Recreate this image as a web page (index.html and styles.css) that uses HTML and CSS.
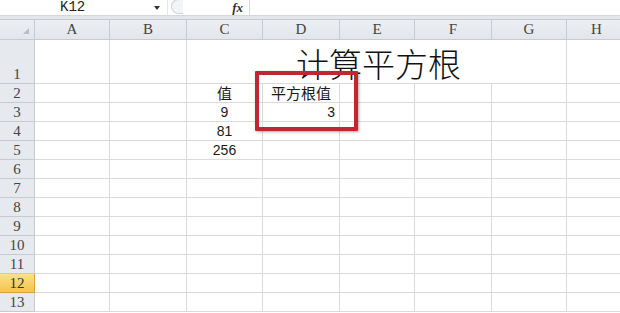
FILE: index.html
```html
<!DOCTYPE html>
<html lang="zh-CN">
<head>
  <meta charset="UTF-8">
  <title>计算平方根</title>
  <link rel="stylesheet" href="styles.css">
</head>
<body>
  <div class="formula-bar">
    <div class="name-box">
      <span class="name-text">K12</span>
      <span class="name-arrow"></span>
    </div>
    <div class="fx-box">
      <span class="grip"></span>
      <span class="fx">fx</span>
    </div>
    <div class="formula-input"></div>
  </div>
  <div class="bar-gap"></div>

  <main class="sheet">
    <div class="hd corner"><span class="corner-tri"></span></div>
    <div class="hd col">A</div>
    <div class="hd col">B</div>
    <div class="hd col">C</div>
    <div class="hd col">D</div>
    <div class="hd col">E</div>
    <div class="hd col">F</div>
    <div class="hd col">G</div>
    <div class="hd col last">H</div>

    <!-- row 1 -->
    <div class="hd row">1</div>
    <div class="cell"></div>
    <div class="cell"></div>
    <div class="cell title">计算平方根</div>
    <div class="cell last"></div>

    <!-- row 2 -->
    <div class="hd row">2</div>
    <div class="cell"></div>
    <div class="cell"></div>
    <div class="cell center">值</div>
    <div class="cell left">平方根值</div>
    <div class="cell"></div>
    <div class="cell"></div>
    <div class="cell"></div>
    <div class="cell last"></div>

    <!-- row 3 -->
    <div class="hd row">3</div>
    <div class="cell"></div>
    <div class="cell"></div>
    <div class="cell center num">9</div>
    <div class="cell right num">3</div>
    <div class="cell"></div>
    <div class="cell"></div>
    <div class="cell"></div>
    <div class="cell last"></div>

    <!-- row 4 -->
    <div class="hd row">4</div>
    <div class="cell"></div>
    <div class="cell"></div>
    <div class="cell center num">81</div>
    <div class="cell"></div>
    <div class="cell"></div>
    <div class="cell"></div>
    <div class="cell"></div>
    <div class="cell last"></div>

    <!-- row 5 -->
    <div class="hd row">5</div>
    <div class="cell"></div>
    <div class="cell"></div>
    <div class="cell center num">256</div>
    <div class="cell"></div>
    <div class="cell"></div>
    <div class="cell"></div>
    <div class="cell"></div>
    <div class="cell last"></div>

    <div class="hd row">6</div>
    <div class="cell"></div><div class="cell"></div><div class="cell"></div><div class="cell"></div>
    <div class="cell"></div><div class="cell"></div><div class="cell"></div><div class="cell last"></div>

    <div class="hd row">7</div>
    <div class="cell"></div><div class="cell"></div><div class="cell"></div><div class="cell"></div>
    <div class="cell"></div><div class="cell"></div><div class="cell"></div><div class="cell last"></div>

    <div class="hd row">8</div>
    <div class="cell"></div><div class="cell"></div><div class="cell"></div><div class="cell"></div>
    <div class="cell"></div><div class="cell"></div><div class="cell"></div><div class="cell last"></div>

    <div class="hd row">9</div>
    <div class="cell"></div><div class="cell"></div><div class="cell"></div><div class="cell"></div>
    <div class="cell"></div><div class="cell"></div><div class="cell"></div><div class="cell last"></div>

    <div class="hd row">10</div>
    <div class="cell"></div><div class="cell"></div><div class="cell"></div><div class="cell"></div>
    <div class="cell"></div><div class="cell"></div><div class="cell"></div><div class="cell last"></div>

    <div class="hd row">11</div>
    <div class="cell"></div><div class="cell"></div><div class="cell"></div><div class="cell"></div>
    <div class="cell"></div><div class="cell"></div><div class="cell"></div><div class="cell last"></div>

    <div class="hd row active">12</div>
    <div class="cell"></div><div class="cell"></div><div class="cell"></div><div class="cell"></div>
    <div class="cell"></div><div class="cell"></div><div class="cell"></div><div class="cell last"></div>

    <div class="hd row">13</div>
    <div class="cell"></div><div class="cell"></div><div class="cell"></div><div class="cell"></div>
    <div class="cell"></div><div class="cell"></div><div class="cell"></div><div class="cell last"></div>

    <!-- annotation box drawn over D2:D3 -->
    <div class="highlight"></div>
  </main>
</body>
</html>
```

FILE: styles.css
```css
* {
  margin: 0;
  padding: 0;
  box-sizing: border-box;
}

body {
  width: 620px;
  height: 313px;
  overflow: hidden;
  background: #fff;
  font-family: "Noto Sans CJK SC", sans-serif;
}

/* formula bar */
.formula-bar {
  display: flex;
  height: 16px;
  background: #fff;
  border-bottom: 1px solid #d4d8de;
}

.name-box {
  width: 168px;
  display: flex;
  align-items: center;
  padding-left: 60px;
  border-right: 1px solid #e2e5ea;
}

.name-text {
  font-family: "Liberation Mono", monospace;
  font-size: 14px;
  line-height: 15px;
  color: #222;
}

.name-arrow {
  margin-left: auto;
  margin-right: 7px;
  border-left: 3px solid transparent;
  border-right: 3px solid transparent;
  border-top: 4px solid #333;
}

.fx-box {
  width: 82px;
  display: flex;
  align-items: center;
  padding: 0 6px 0 3px;
  border-right: 1px solid #d4d8de;
}

.grip {
  width: 12px;
  height: 15px;
  margin-top: -2px;
  border: 1px solid #cfd3d9;
  border-right: none;
  border-radius: 8px 0 0 8px;
  background: #f3f4f6;
}

.fx {
  margin-left: auto;
  font-family: "Liberation Serif", serif;
  font-style: italic;
  font-weight: bold;
  font-size: 13px;
  line-height: 13px;
  color: #333;
}

.formula-input {
  flex: 1;
}

.bar-gap {
  height: 3px;
  background: #e3e6eb;
}

/* sheet */
.sheet {
  position: relative;
  display: grid;
  grid-template-columns: 35px 75px 77px 76px 77px 75px 77px 75px 60px;
  grid-template-rows: 21px 44px repeat(12, 19px);
}

.hd {
  background: linear-gradient(#eceef2, #e2e6eb);
  border-right: 1px solid #c6cbd2;
  border-bottom: 1px solid #c6cbd2;
  font-family: "Liberation Serif", serif;
  font-size: 15px;
  color: #444;
  display: flex;
  justify-content: center;
}

.hd.col {
  align-items: center;
  border-top: 1px solid #c6cbd2;
}

.hd.corner {
  border-top: 1px solid #c6cbd2;
  position: relative;
}

.corner-tri {
  position: absolute;
  right: 5px;
  bottom: 5px;
  width: 0;
  height: 0;
  border-left: 6px solid transparent;
  border-bottom: 6px solid #b9bec5;
}

.hd.row {
  align-items: flex-end;
  line-height: 18px;
  background: #e6e9ee;
}

.hd.active {
  background: linear-gradient(#fbe08a, #f4c44c);
  border-bottom-color: #d8a43a;
  border-right-color: #d8a43a;
  color: #333;
}

.cell {
  border-right: 1px solid #dadada;
  border-bottom: 1px solid #dadada;
  font-size: 15px;
  line-height: 18px;
  color: #1a1a1a;
  display: flex;
  align-items: flex-end;
  white-space: nowrap;
}

.cell.last {
  border-right: none;
}

.cell.center {
  justify-content: center;
}

.cell.left {
  padding-left: 8px;
}

.cell.right {
  justify-content: flex-end;
  padding-right: 4px;
}

.cell.num {
  font-family: "Liberation Sans", sans-serif;
  font-size: 14px;
}

.cell.title {
  grid-column: span 5;
  justify-content: center;
  font-size: 33px;
  font-weight: 300;
  line-height: 36px;
  padding: 0 0 2px 4px;
  color: #111;
}

.highlight {
  position: absolute;
  left: 255px;
  top: 52px;
  width: 103px;
  height: 60px;
  border: 4px solid #c42630;
  border-radius: 1px;
  box-shadow: 1px 1px 3px rgba(0, 0, 0, 0.35);
}
```
